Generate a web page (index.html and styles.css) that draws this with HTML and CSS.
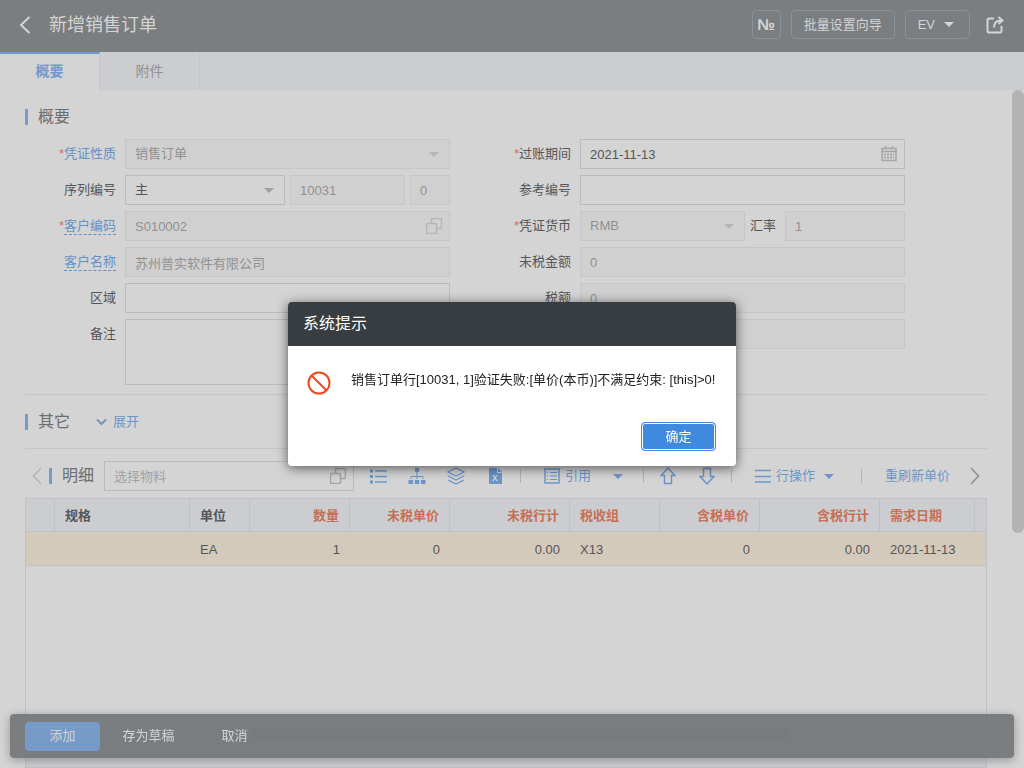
FILE: index.html
```
<!DOCTYPE html>
<html lang="zh-CN">
	<head>
		<meta charset="UTF-8" />
		<meta name="viewport" content="width=device-width, initial-scale=1.0" />
		<title>新增销售订单</title>
		<link rel="stylesheet" href="styles.css">
	</head>
	<body>
		<header class="topbar">
			<button class="icon-button" aria-label="返回">
				<svg width="12" height="18" viewBox="0 0 12 18"><path d="M10.500 1 2 9l8.500 8" stroke-width="2" /></svg>
			</button>
			<h1>新增销售订单</h1>
			<div class="topbar-actions">
				<button class="top-button number-button">№</button>
				<button class="top-button">批量设置向导</button>
				<button class="top-button">EV <span class="caret"></span></button>
				<button class="icon-button share" aria-label="分享">
					<svg width="18" height="18" viewBox="0 0 18 18">
						<path d="M8 2.500H3Q1.500 2.500 1.500 4v11q0 1.500 1.500 1.500h11q1.500 0 1.500-1.500V10" stroke-width="2" />
						<path d="M8 11.500Q8 4.500 15 4.500M12.500 1l4 3.500-4 3.500" stroke-width="2" />
					</svg>
				</button>
			</div>
		</header>

		<nav class="tabs">
			<a href="#summary" class="tab active">概要</a>
			<a href="#attachments" class="tab">附件</a>
		</nav>

		<main class="content" id="summary">
			<h2 class="section-title">概要</h2>
			<form class="order-form">
				<div class="form-column">
					<div class="row">
						<label for="nature" class="blue required">凭证性质</label>
						<div class="select-box">
							<select id="nature" disabled><option>销售订单</option></select>
							<span class="caret"></span>
						</div>
					</div>
					<div class="row">
						<label for="series">序列编号</label>
						<div class="fields">
							<div class="select-box series">
								<select id="series"><option>主</option></select>
								<span class="caret"></span>
							</div>
							<input class="series-number" aria-label="编号" value="10031" disabled>
							<input class="series-sub" aria-label="子编号" value="0" disabled>
						</div>
					</div>
					<div class="row">
						<label for="code" class="blue required dashed"><span>客户编码</span></label>
						<div class="icon-field">
							<input id="code" value="S010002" disabled>
							<svg class="field-icon pale" width="16" height="16" viewBox="0 0 16 16"><rect x=".5" y="5.500" width="10" height="10" rx="1" /><path d="M5.500 5V1.500q0-1 1-1h8q1 0 1 1v8q0 1-1 1H11" /></svg>
						</div>
					</div>
					<div class="row">
						<label for="name" class="blue dashed"><span>客户名称</span></label>
						<input id="name" value="苏州普实软件有限公司" disabled>
					</div>
					<div class="row">
						<label for="area">区域</label>
						<input id="area">
					</div>
					<div class="row">
						<label for="remark">备注</label>
						<textarea id="remark"></textarea>
					</div>
				</div>
				<div class="form-column">
					<div class="row">
						<label for="period" class="required">过账期间</label>
						<div class="icon-field">
							<input id="period" value="2021-11-13">
							<svg class="field-icon" width="16" height="16" viewBox="0 0 16 16">
								<path d="M1 2.500h14v12H1zM1 5.500h14M4.500 0v3M11.500 0v3" />
								<path d="M3 8.500h10M3 11.500h10" stroke-width="2" stroke-dasharray="2 1" />
							</svg>
						</div>
					</div>
					<div class="row">
						<label for="reference">参考编号</label>
						<input id="reference">
					</div>
					<div class="row">
						<label for="currency" class="required">凭证货币</label>
						<div class="fields">
							<div class="select-box currency">
								<select id="currency" disabled><option>RMB</option></select>
								<span class="caret"></span>
							</div>
							<label for="rate" class="rate-label">汇率</label>
							<input id="rate" class="rate" value="1" disabled>
						</div>
					</div>
					<div class="row">
						<label for="net">未税金额</label>
						<input id="net" value="0" disabled>
					</div>
					<div class="row">
						<label for="tax">税额</label>
						<input id="tax" value="0" disabled>
					</div>
					<div class="row">
						<label for="total">含税金额</label>
						<input id="total" value="0" disabled>
					</div>
				</div>
			</form>

			<section class="other">
				<h2 class="section-title">其它</h2>
				<button class="expand">
					<svg width="11" height="8" viewBox="0 0 11 8"><path d="M1 1.500l4.500 4.500L10 1.500" stroke-width="2" /></svg>
					展开
				</button>
			</section>

			<section class="toolbar">
				<button class="scroll-left" aria-label="向左">
					<svg width="10" height="18" viewBox="0 0 10 18"><path d="M9 1 1.500 9 9 17" stroke-width="1.500" /></svg>
				</button>
				<h2 class="section-title">明细</h2>
				<div class="icon-field item-search">
					<input aria-label="选择物料" placeholder="选择物料">
					<svg class="field-icon" width="16" height="16" viewBox="0 0 16 16"><rect x=".5" y="5.500" width="10" height="10" rx="1" /><path d="M5.500 5V1.500q0-1 1-1h8q1 0 1 1v8q0 1-1 1H11" /></svg>
				</div>
				<div class="tool-icons">
					<button aria-label="列表">
						<svg width="18" height="18" viewBox="0 0 18 18"><path d="M6 4h12M6 9.500h12M6 15h12" stroke-width="1.500" /><path class="solid" d="M1 2.500h3v3H1zM1 8h3v3H1zM1 13.500h3v3H1z" /></svg>
					</button>
					<button aria-label="层级">
						<svg width="18" height="18" viewBox="0 0 18 18"><path d="M9 5v7M3 12V9.500h12v2.500" /><path class="solid" d="M7 1h4v4H7zM.500 13h4.500v4H.500zM6.800 13h4.500v4H6.800zM13 13h4.500v4H13z" /></svg>
					</button>
					<button aria-label="图层">
						<svg width="18" height="18" viewBox="0 0 18 18"><path d="M9 1 1 5l8 4 8-4zM1 9l8 4 8-4M1 13l8 4 8-4" stroke-width="1.300" /></svg>
					</button>
					<button aria-label="导出表格">
						<svg width="18" height="18" viewBox="0 0 18 18"><path class="solid" d="M3 1h8v5h5v11H3zM12 1l4 4h-4z" /><path class="cutout" d="M7 8l4 6M11 8l-4 6" /></svg>
					</button>
				</div>
				<span class="separator"></span>
				<button class="tool-text">
					<svg width="16" height="16" viewBox="0 0 16 16"><path d="M1 1h14v14H1z" stroke-width="1.500" /><path d="M3 4.500h1M6 4.500h7M3 8h1M6 8h7M3 11.500h1M6 11.500h7" /></svg>
					引用 <span class="caret wide"></span>
				</button>
				<span class="separator"></span>
				<div class="tool-icons arrows">
					<button aria-label="上移">
						<svg width="16" height="18" viewBox="0 0 16 18"><path d="M8 1 1 8.500h3.500V16.500h7V8.500H15z" stroke-width="1.500" /></svg>
					</button>
					<button aria-label="下移">
						<svg width="16" height="18" viewBox="0 0 16 18"><path d="M8 17 1 9.500h3.500V1.500h7V9.500H15z" stroke-width="1.500" /></svg>
					</button>
				</div>
				<span class="separator"></span>
				<button class="tool-text">
					<svg width="16" height="14" viewBox="0 0 16 14"><path d="M0 1.500h16M0 7.500h16M0 13h16" stroke-width="1.500" /></svg>
					行操作 <span class="caret"></span>
				</button>
				<span class="separator"></span>
				<button class="tool-text">重刷新单价</button>
				<button class="scroll-right" aria-label="向右">
					<svg width="10" height="18" viewBox="0 0 10 18"><path d="M1 1l7.500 8L1 17" stroke-width="1.500" /></svg>
				</button>
			</section>

			<div class="grid">
				<table>
					<colgroup>
						<col class="w-index"><col class="w-spec"><col class="w-unit"><col class="w-price"><col class="w-price">
						<col class="w-total"><col class="w-group"><col class="w-price"><col class="w-total"><col class="w-date"><col>
					</colgroup>
					<thead>
						<tr>
							<th></th>
							<th>规格</th>
							<th>单位</th>
							<th class="must number">数量</th>
							<th class="must number">未税单价</th>
							<th class="must number">未税行计</th>
							<th class="must">税收组</th>
							<th class="must number">含税单价</th>
							<th class="must number">含税行计</th>
							<th class="must">需求日期</th>
							<th></th>
						</tr>
					</thead>
					<tbody>
						<tr>
							<td></td>
							<td></td>
							<td>EA</td>
							<td class="number">1</td>
							<td class="number">0</td>
							<td class="number">0.00</td>
							<td>X13</td>
							<td class="number">0</td>
							<td class="number">0.00</td>
							<td>2021-11-13</td>
							<td></td>
						</tr>
					</tbody>
				</table>
				<div class="grid-footer"><span class="grid-thumb"></span></div>
			</div>
			<span class="page-thumb"></span>
		</main>

		<footer class="bottom-bar">
			<button class="primary">添加</button>
			<button>存为草稿</button>
			<button>取消</button>
		</footer>

		<div class="mask">
			<div class="dialog" role="alertdialog" aria-labelledby="dialog-title" aria-describedby="dialog-text">
				<h2 id="dialog-title">系统提示</h2>
				<div class="dialog-body">
					<svg width="24" height="24" viewBox="0 0 24 24"><circle cx="12" cy="12" r="10.500" /><path d="M4.500 4.500l15 15" /></svg>
					<p id="dialog-text">销售订单行[10031, 1]验证失败:[单价(本币)]不满足约束: [this]&gt;0!</p>
				</div>
				<div class="dialog-actions"><button>确定</button></div>
			</div>
		</div>
	</body>
</html>
```
FILE: styles.css
```
* {
	box-sizing: border-box;
}
body {
	display: flex;
	flex-direction: column;
	height: 100vh;
	margin: 0;
	overflow: hidden;
	font: 13px/20px 'Liberation Sans', 'Noto Sans CJK SC', sans-serif;
	background: #d4d4d4;
	color: #545658;
}
h1,
h2,
p {
	margin: 0;
	font-weight: normal;
}
button {
	padding: 0;
	border: 0;
	background: none;
	color: inherit;
	font: inherit;
	cursor: pointer;
}
svg {
	display: block;
	flex: none;
	fill: none;
	stroke: currentColor;
}
.solid {
	fill: currentColor;
	stroke: none;
}
.caret {
	border: 5px solid transparent;
	border-top-color: currentColor;
	border-bottom: 0;
}

/* Top bar */
.topbar {
	display: flex;
	flex: none;
	align-items: center;
	height: 52px;
	padding: 0 20px 3px 19px;
	background: #7a7e80;
	color: #d4d4d4;
}
.topbar h1 {
	margin-left: 18px;
	font-size: 18px;
	line-height: 24px;
}
.topbar-actions {
	display: flex;
	align-items: center;
	gap: 10px;
	margin-left: auto;
}
.top-button {
	display: flex;
	align-items: center;
	gap: 9px;
	height: 29px;
	padding: 0 12px;
	border: 1px solid #8b919a;
	border-radius: 4px;
}
.top-button .caret {
	margin-right: 3px;
}
.number-button {
	justify-content: center;
	width: 29px;
	padding: 0;
	font-size: 16px;
	font-weight: bold;
}
.share {
	margin-left: 6px;
}

/* Tabs */
.tabs {
	display: flex;
	flex: none;
	height: 38px;
	background: #cccdd0;
	border-bottom: 1px solid #cacbce;
}
.tab {
	width: 100px;
	height: 37px;
	padding-top: 9px;
	border-right: 1px solid #c4c6c9;
	color: #8e9194;
	font-size: 14px;
	text-align: center;
	text-decoration: none;
}
.tab.active {
	height: 38px;
	padding-top: 7px;
	border-top: 2px solid #7199cc;
	background: #d4d4d4;
	color: #7199c9;
	font-weight: bold;
}

/* Page content */
.content {
	position: relative;
	display: flex;
	flex: 1;
	flex-direction: column;
	min-height: 0;
	padding: 15px 37px 0 25px;
}
.section-title {
	display: flex;
	align-items: center;
	gap: 10px;
	color: #6b6d6f;
	font-size: 16px;
	line-height: 24px;
}
.section-title::before {
	content: '';
	width: 3px;
	height: 16px;
	background: #769bc9;
}
.page-thumb {
	position: absolute;
	top: 0;
	right: 0;
	width: 12px;
	height: 443px;
	border-radius: 6px;
	background: #b3b3b3;
}

/* Form */
.order-form {
	display: grid;
	grid-template-columns: 1fr 1fr;
	gap: 30px;
	padding: 10px 82px 9px 0;
}
.form-column {
	display: flex;
	flex-direction: column;
	gap: 6px;
}
.row {
	display: grid;
	grid-template-columns: 91px 1fr;
	gap: 9px;
}
label {
	line-height: 30px;
	text-align: right;
	white-space: nowrap;
}
.required::before {
	content: '*';
	color: #d0705a;
}
.blue {
	color: #6490c8;
}
.dashed span {
	padding-bottom: 1px;
	border-bottom: 1px dashed #6490c8;
}
input,
select,
textarea {
	display: block;
	width: 100%;
	height: 30px;
	margin: 0;
	padding: 0 9px;
	border: 1px solid #bbb;
	border-radius: 0;
	background: #d4d4d4;
	color: #545658;
	font: inherit;
	appearance: none;
	resize: none;
	opacity: 1;
}
textarea {
	height: 66px;
}
input::placeholder {
	color: #a3a3a3;
}
input:disabled,
select:disabled {
	border-color: #c6c6c6;
	background: #d0d0d0;
	color: #909090;
}
.fields {
	display: flex;
	gap: 5px;
}
.select-box,
.icon-field {
	position: relative;
}
.select-box .caret {
	position: absolute;
	top: 13px;
	right: 11px;
	color: #a0a0a0;
}
.select-box select:disabled + .caret {
	color: #b5b5b5;
}
.field-icon {
	position: absolute;
	top: 7px;
	right: 8px;
	color: #a5a5a5;
	stroke-width: 1.5;
}
.field-icon.pale {
	color: #b5b5b5;
}
.series {
	flex: 1;
}
.series-number {
	width: 115px;
}
.series-sub {
	width: 40px;
}
.currency {
	flex: 1;
}
.rate-label {
	width: 30px;
	text-align: left;
}
.rate {
	width: 120px;
}

/* Other section */
.other {
	display: flex;
	align-items: center;
	gap: 26px;
	height: 55px;
	border-top: 1px solid #c5c5c5;
	border-bottom: 1px solid #c5c5c5;
}
.expand {
	display: flex;
	align-items: center;
	gap: 6px;
	color: #6c96ca;
}

/* Detail toolbar */
.toolbar {
	display: flex;
	align-items: center;
	padding: 12px 7px 7px;
	color: #6c96ca;
	white-space: nowrap;
}
.scroll-left {
	margin-right: 7px;
	color: #b5b5b5;
}
.item-search {
	width: 250px;
	margin: 0 15px 0 10px;
}
.tool-icons {
	display: flex;
	gap: 21px;
}
.tool-icons.arrows {
	gap: 23px;
}
.cutout {
	stroke: #d4d4d4;
	stroke-width: 1.3;
}
.separator {
	width: 1px;
	height: 14px;
	margin: 0 16px;
	background: #b3b3b3;
}
.tool-text {
	display: flex;
	align-items: center;
	gap: 5px;
	margin: 0 7px;
}
.tool-text .caret {
	margin: 0 4px;
}
.tool-text .wide {
	margin-left: 17px;
	margin-right: -3px;
}
.scroll-right {
	margin-left: auto;
	color: #8e8e8e;
}

/* Detail grid */
.grid {
	display: flex;
	flex: 1;
	flex-direction: column;
	border: 1px solid #bfc1c6;
}
table {
	width: 100%;
	table-layout: fixed;
	border-collapse: separate;
	border-spacing: 0;
}
th,
td {
	padding: 2px 10px 0;
	text-align: left;
	white-space: nowrap;
}
th {
	height: 33px;
	border-right: 1px solid #bfc1c6;
	border-bottom: 1px solid #bfc1c6;
	background: #cccdd0;
	font-weight: bold;
}
td {
	height: 34px;
	border-bottom: 1px solid #c9c1b5;
	background: #d4cabb;
}
th:last-child {
	border-right: 0;
}
.number {
	text-align: right;
}
.must {
	color: #c66f55;
}
.w-index {
	width: 29px;
}
.w-spec {
	width: 135px;
}
.w-unit {
	width: 60px;
}
.w-price {
	width: 100px;
}
.w-total {
	width: 120px;
}
.w-group {
	width: 90px;
}
.w-date {
	width: 95px;
}
.grid-footer {
	position: relative;
	height: 28px;
	margin-top: auto;
	border-top: 1px solid #bfc1c6;
	background: #cccdd0;
}
.grid-thumb {
	position: absolute;
	bottom: 100%;
	left: 224px;
	width: 540px;
	height: 12px;
	border-radius: 6px;
	background: #b3b3b3;
}

/* Bottom bar */
.bottom-bar {
	position: fixed;
	right: 10px;
	bottom: 10px;
	left: 10px;
	display: flex;
	align-items: center;
	gap: 11px;
	height: 44px;
	padding: 0 15px;
	border-radius: 4px;
	background: rgba(112, 116, 119, 0.9);
	box-shadow: 0 2px 10px rgba(0, 0, 0, 0.3);
	color: #d4d4d4;
}
.bottom-bar button {
	min-width: 75px;
	height: 29px;
	border-radius: 4px;
}
.bottom-bar .primary {
	background: #769bc9;
}

/* Message dialog */
.mask {
	position: fixed;
	inset: 0;
	display: flex;
	align-items: center;
	justify-content: center;
}
.dialog {
	width: 448px;
	border-radius: 4px;
	background: #fff;
	box-shadow: 0 2px 12px rgba(0, 0, 0, 0.6);
	color: #222;
}
.dialog h2 {
	padding: 10px 15px;
	border-radius: 4px 4px 0 0;
	background: #383d41;
	color: #fff;
	font-size: 16px;
	line-height: 24px;
}
.dialog-body {
	display: flex;
	gap: 20px;
	padding: 24px 20px 0 19px;
	white-space: nowrap;
}
.dialog-body svg {
	margin-top: 1px;
	color: #f04822;
	stroke-width: 2;
}
.dialog-actions {
	display: flex;
	justify-content: flex-end;
	padding: 27px 20px 15px;
}
.dialog-actions button {
	width: 75px;
	height: 29px;
	border: 1px solid #3f89de;
	border-radius: 4px;
	background: #3f89de;
	box-shadow: inset 0 0 0 1px #fff;
	color: #fff;
}
```
